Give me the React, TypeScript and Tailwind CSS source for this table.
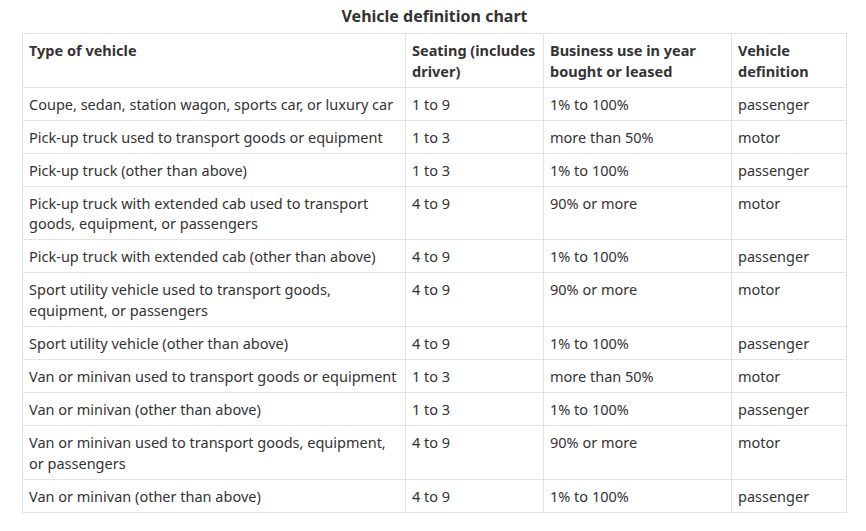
const ROWS: [string, string, string, string][] = [
  ["Coupe, sedan, station wagon, sports car, or luxury car", "1 to 9", "1% to 100%", "passenger"],
  ["Pick-up truck used to transport goods or equipment", "1 to 3", "more than 50%", "motor"],
  ["Pick-up truck (other than above)", "1 to 3", "1% to 100%", "passenger"],
  ["Pick-up truck with extended cab used to transport goods, equipment, or passengers", "4 to 9", "90% or more", "motor"],
  ["Pick-up truck with extended cab (other than above)", "4 to 9", "1% to 100%", "passenger"],
  ["Sport utility vehicle used to transport goods, equipment, or passengers", "4 to 9", "90% or more", "motor"],
  ["Sport utility vehicle (other than above)", "4 to 9", "1% to 100%", "passenger"],
  ["Van or minivan used to transport goods or equipment", "1 to 3", "more than 50%", "motor"],
  ["Van or minivan (other than above)", "1 to 3", "1% to 100%", "passenger"],
  ["Van or minivan used to transport goods, equipment, or passengers", "4 to 9", "90% or more", "motor"],
  ["Van or minivan (other than above)", "4 to 9", "1% to 100%", "passenger"],
];

const HEADERS = [
  "Type of vehicle",
  "Seating (includes driver)",
  "Business use in year bought or leased",
  "Vehicle definition",
];

const cell = "border border-[#e3e3e3] px-[6px] pt-[6px] pb-[5px] align-top text-left";

export default function App() {
  return (
    <div className="min-h-screen bg-white font-['Noto_Sans',sans-serif] text-[14.5px] leading-[20.9px] text-[#333333]">
      <div className="pl-[22px]">
        <table className="w-[824px] table-fixed border-collapse">
          <caption className="h-[33px] pt-[5px] text-[16px] font-bold leading-[22px] text-[#333333]">
            Vehicle definition chart
          </caption>
          <colgroup>
            <col className="w-[383px]" />
            <col className="w-[138px]" />
            <col className="w-[188px]" />
            <col className="w-[115px]" />
          </colgroup>
          <thead>
            <tr>
              {HEADERS.map((h) => (
                <th key={h} className={`${cell} font-bold`}>
                  {h}
                </th>
              ))}
            </tr>
          </thead>
          <tbody>
            {ROWS.map((row, i) => (
              <tr key={i}>
                {row.map((value, j) => (
                  <td key={j} className={cell}>
                    {value}
                  </td>
                ))}
              </tr>
            ))}
          </tbody>
        </table>
      </div>
    </div>
  );
}
